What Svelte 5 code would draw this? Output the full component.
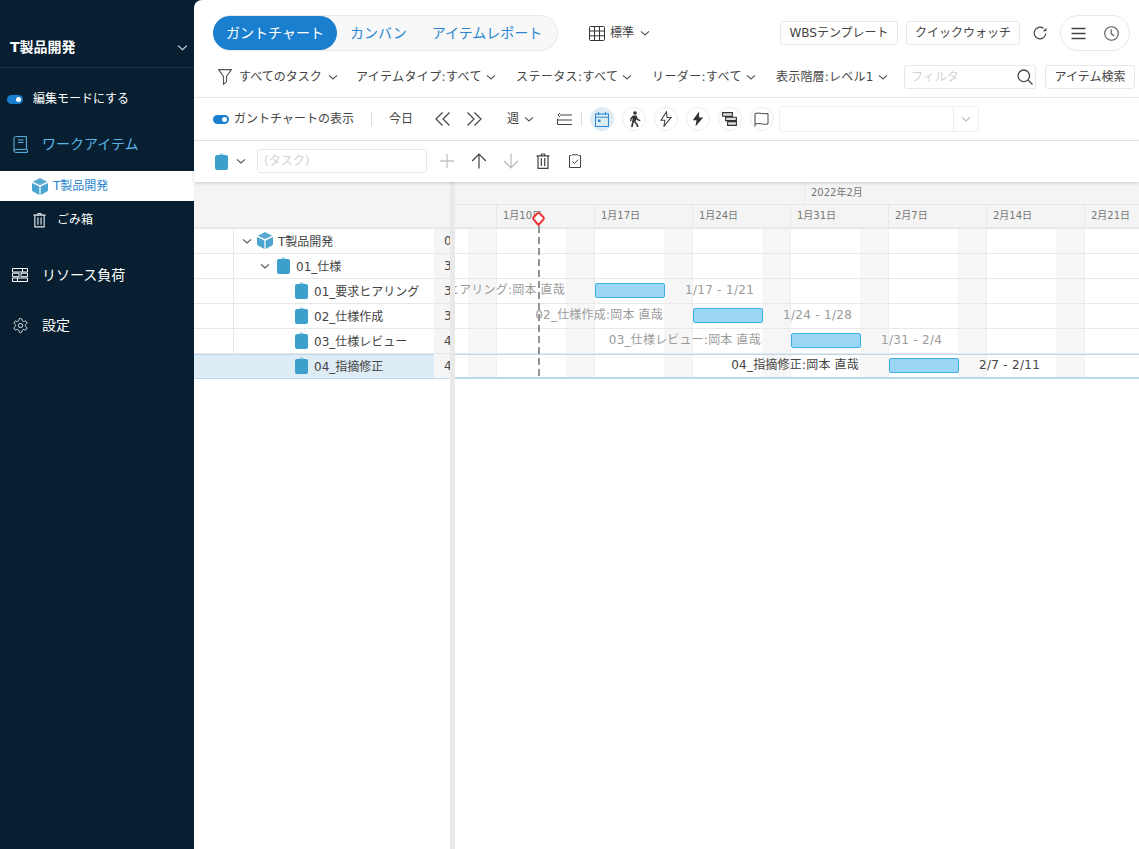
<script>
  const filters = [
    { t: 'すべてのタスク', m: 7, w: 84, ls: 0 },
    { t: 'アイテムタイプ:すべて', m: 18, w: 125, ls: 0.4 },
    { t: 'ステータス:すべて', m: 20, w: 101, ls: 0.4 },
    { t: 'リーダー:すべて', m: 20, w: 89, ls: 0.4 },
    { t: '表示階層:レベル1', m: 20, w: 97, ls: 0.2 }
  ];
  const rows = [
    { name: 'T製品開発', num: '0', level: 0, kind: 'cube', open: true },
    { name: '01_仕様', num: '3', level: 1, kind: 'clip', open: true },
    { name: '01_要求ヒアリング', num: '3', level: 2, kind: 'clip', start: 140, date: '1/17 - 1/21' },
    { name: '02_仕様作成', num: '3', level: 2, kind: 'clip', start: 238, date: '1/24 - 1/28' },
    { name: '03_仕様レビュー', num: '4', level: 2, kind: 'clip', start: 336, date: '1/31 - 2/4' },
    { name: '04_指摘修正', num: '4', level: 2, kind: 'clip', start: 434, date: '2/7 - 2/11', selected: true }
  ];
  const weeks = ['1月10日', '1月17日', '1月24日', '1月31日', '2月7日', '2月14日', '2月21日'];
  const gridWeeks = ['', ...weeks];
  const pad = [1, 19, 39];
  const twGap = [5, 7, 5];
</script>

{#snippet chev(size = 10, color = '#555')}
  <svg class="chev" width={size} height={size} viewBox="0 0 10 10" fill="none" stroke={color} stroke-width="1.1"><path d="M1 3.3 5 7l4-3.7" /></svg>
{/snippet}

{#snippet clip()}
  <svg width="13" height="17" viewBox="0 0 13 17"><path fill="#3d9fcc" d="M4.4 2 5 1h3l.6 1h2.4a2 2 0 0 1 2 2v11a2 2 0 0 1-2 2H2a2 2 0 0 1-2-2V4a2 2 0 0 1 2-2z" /><path fill="#8cc8e4" d="M5 .6h3v1.6H5z" /></svg>
{/snippet}

{#snippet cube()}
  <svg width="16" height="17" viewBox="0 0 16 17" fill="#4ba3cf"><path d="M8 0 15.200 3.700 8 7.300 .8 3.700z" fill="#5aabd3" /><path d="M0 5 7.400 8.600V17L1 13.500a2 2 0 0 1-1-1.700z" /><path d="M16 5 8.600 8.600V17l6.400-3.500a2 2 0 0 0 1-1.700z" /></svg>
{/snippet}

{#snippet trash(color, w = 14, h = 16)}
  <svg width={w} height={h} viewBox="0 0 14 16" fill="none" stroke={color} stroke-width="1.200"><path d="M.5 2.800h13M5 2.600 5.500 1h3L9 2.600M2 2.800V15.400h10V2.800M5.300 5v8M8.700 5v8" /></svg>
{/snippet}

<div class="app">
  <aside class="side">
    <div class="project"><span>T製品開発</span>{@render chev(11, '#cfd8de')}</div>
    <div class="edit"><span class="toggle"></span><span>編集モードにする</span></div>
    <div class="nav work">
      <svg width="15" height="17" viewBox="0 0 15 17" fill="none" stroke="#62b9e8" stroke-width="1"><path d="M2.600.600H13.400V13.400H2.600A1.600 1.600 0 0 0 1 15V2.200A1.600 1.600 0 0 1 2.600.600zM1 15a1.500 1.500 0 0 0 1.600 1.400h11.800v-3M5 4h5.500M5 6.500h5.500" /></svg>
      <span>ワークアイテム</span>
    </div>
    <div class="sub active">{@render cube()}<span>T製品開発</span></div>
    <div class="sub trash">{@render trash('#e8edf0', 13, 16)}<span>ごみ箱</span></div>
    <div class="nav res">
      <svg width="16" height="14" viewBox="0 0 16 14" fill="none" stroke="#fff" stroke-width="1"><path d="M.5.500h15v3.500H.5zM.5 5.200h6.500v3.500H.5zM9 5.200h6.500v3.500H9zM.5 10h15v3.500H.5zM5.500 10v3.500M10.500.500V4" /></svg>
      <span>リソース負荷</span>
    </div>
    <div class="nav set">
      <svg width="17" height="17" viewBox="0 0 24 24" fill="none" stroke="#dfe6ea" stroke-width="1.400"><path d="M12.220 2h-.44a2 2 0 0 0-2 2v.18a2 2 0 0 1-1 1.730l-.43.250a2 2 0 0 1-2 0l-.15-.08a2 2 0 0 0-2.730.730l-.22.380a2 2 0 0 0 .730 2.730l.15.100a2 2 0 0 1 1 1.720v.510a2 2 0 0 1-1 1.740l-.15.090a2 2 0 0 0-.730 2.730l.22.380a2 2 0 0 0 2.730.730l.15-.08a2 2 0 0 1 2 0l.43.250a2 2 0 0 1 1 1.730V20a2 2 0 0 0 2 2h.44a2 2 0 0 0 2-2v-.18a2 2 0 0 1 1-1.730l.43-.25a2 2 0 0 1 2 0l.15.08a2 2 0 0 0 2.730-.73l.22-.39a2 2 0 0 0-.73-2.730l-.15-.08a2 2 0 0 1-1-1.740v-.5a2 2 0 0 1 1-1.740l.15-.09a2 2 0 0 0 .73-2.730l-.22-.38a2 2 0 0 0-2.730-.73l-.15.08a2 2 0 0 1-2 0l-.43-.25a2 2 0 0 1-1-1.730V4a2 2 0 0 0-2-2z" /><circle cx="12" cy="12" r="3" /></svg>
      <span>設定</span>
    </div>
  </aside>

  <main class="main">
    <div class="bar1">
      <div class="tabs">
        <span class="tab on">ガントチャート</span>
        <span class="tab kan">カンバン</span>
        <span class="tab rep">アイテムレポート</span>
      </div>
      <div class="view">
        <svg width="16" height="15" viewBox="0 0 16 15" fill="none" stroke="#333" stroke-width="1"><rect x=".5" y=".5" width="15" height="14" rx="1" /><path d="M.5 5h15M.5 9.800h15M5.500.500v14M10.500.500v14" /></svg>
        <span>標準</span>{@render chev()}
      </div>
      <div class="right1">
        <span class="btn wbs">WBSテンプレート</span>
        <span class="btn">クイックウォッチ</span>
        <svg class="refresh" width="14" height="14" viewBox="0 0 14 14" fill="none" stroke="#444" stroke-width="1.200"><path d="M12.800 7.500A5.800 5.800 0 1 1 10.500 2.400" /><path d="M9.800 5.200h3.600V1.800z" fill="#444" stroke="none" /></svg>
        <div class="pill">
          <svg width="15" height="13" viewBox="0 0 15 13" stroke="#444" stroke-width="1.500"><path d="M.5 1.500h14M.5 6.500h14M.5 11.500h14" /></svg>
          <svg width="15" height="15" viewBox="0 0 15 15" fill="none" stroke="#555" stroke-width="1.100"><circle cx="7.500" cy="7.500" r="6.800" /><path d="M7.200 3.200v4.500l3 2.300" /></svg>
        </div>
      </div>
    </div>

    <div class="bar2">
      <svg class="funnel" width="14" height="16" viewBox="0 0 14 16" fill="none" stroke="#555" stroke-width="1.100"><path d="M.6.600h12.800L8.500 7.400v5.200l-3 2.800V7.400z" /></svg>
      {#each filters as f}
        <span class="filter" style="margin-left: {f.m}px"><span style="width: {f.w}px; letter-spacing: {f.ls}px">{f.t}</span>{@render chev()}</span>
      {/each}
      <div class="right2">
        <div class="search">
          <span>フィルタ</span>
          <svg width="16" height="16" viewBox="0 0 16 16" fill="none" stroke="#444" stroke-width="1.300"><circle cx="6.800" cy="6.800" r="5.800" /><path d="m11 11 4.500 4.500" /></svg>
        </div>
        <span class="btn find">アイテム検索</span>
      </div>
    </div>

    <div class="bar3">
      <span class="toggle"></span>
      <span class="lbl">ガントチャートの表示</span>
      <span class="vr v1"></span>
      <span class="today">今日</span>
      <svg class="prev" width="16" height="14" viewBox="0 0 16 14" fill="none" stroke="#444" stroke-width="1.200"><path d="M7.500.500 1 7l6.500 6.500M14.500.500 8 7l6.500 6.500" /></svg>
      <svg class="next" width="16" height="14" viewBox="0 0 16 14" fill="none" stroke="#444" stroke-width="1.200"><path d="M1.500.500 8 7l-6.500 6.500M8.500.500 15 7l-6.500 6.500" /></svg>
      <span class="week"><span>週</span>{@render chev()}</span>
      <svg class="indent" width="15" height="14" viewBox="0 0 15 14" fill="none" stroke="#444" stroke-width="1"><path d="M3 3h12M.5 8h14.500M.5 12.500h14.500M.5 6.500v6" /><path d="m3 1-2 2 2 2" /></svg>
      <span class="vr v2"></span>
      <div class="circles">
        <span class="circ cal">
          <svg width="14" height="15" viewBox="0 0 14 15" fill="none" stroke="#2f8ad6" stroke-width="1.100"><rect x=".5" y="2" width="13" height="12.500" /><path d="M.5 5.200h13M3.500 0v3M10.500 0v3" /><rect x="3" y="7.500" width="2.500" height="2.500" fill="#2f8ad6" stroke="none" /></svg>
        </span>
        <span class="circ">
          <svg width="14" height="16" viewBox="0 0 14 16" fill="#333"><circle cx="8" cy="2" r="1.800" /><path d="M6 4.500h3.500L11 8l2.500 1-.5 1.200-3.300-1.300-.5-1 -.7 2.800 2.300 2.200L11.500 16h-1.600L9 13.200 6.800 11 5.700 16H4L5.800 7.300 4.700 8 4.200 10.400 3 10.100 3.500 7z" /></svg>
        </span>
        <span class="circ">
          <svg width="12" height="16" viewBox="0 0 12 16" fill="none" stroke="#444" stroke-width="1.100"><path d="M6.500.800 1 9.200h3.800L4 15.200 11 6.500H7z" /></svg>
        </span>
        <span class="circ">
          <svg width="12" height="16" viewBox="0 0 12 16" fill="#333"><path d="M7 .5 .8 9.200h3.700L3.500 15.500 11.200 6.500H7.200z" /></svg>
        </span>
        <span class="circ">
          <svg width="15" height="14" viewBox="0 0 15 14" fill="#ddd" stroke="#333" stroke-width="1.100"><path d="M.6.600h9.800v3.600H.6zM3.600 5.200h10.800v3.400H3.600zM5.600 9.600h8.800v3.800H5.600z" /></svg>
        </span>
        <span class="circ">
          <svg width="15" height="15" viewBox="0 0 15 15" fill="none" stroke="#444" stroke-width="1"><path d="M1 14.500V1.500c4-1.500 9 1.200 13 0v10.500c-4 1.200-9-1.500-13 0" /></svg>
        </span>
      </div>
      <div class="select">
        <span class="sel-main"></span>
        <span class="sel-arrow">{@render chev(10, '#bbb')}</span>
      </div>
    </div>

    <div class="bar4">
      {@render clip()}
      <span class="c4">{@render chev()}</span>
      <div class="task">(タスク)</div>
      <div class="tools">
        <svg width="16" height="16" viewBox="0 0 16 16" stroke="#c4c4c4" stroke-width="1.300"><path d="M8 1v14M1 8h14" /></svg>
        <svg width="16" height="16" viewBox="0 0 16 16" fill="none" stroke="#444" stroke-width="1.200"><path d="M8 15.500V1.500M1.200 8 8 1.200 14.800 8" /></svg>
        <svg width="16" height="16" viewBox="0 0 16 16" fill="none" stroke="#b8b8b8" stroke-width="1.200"><path d="M8 .5v14M1.200 8 8 14.800 14.800 8" /></svg>
        <span class="tt">{@render trash('#444', 14, 16)}</span>
        <svg class="tt" width="16" height="16" viewBox="0 0 16 16" fill="none" stroke="#444" stroke-width="1"><path d="M2.500 2.500h2M11.500 2.500h2M2.500 2.500v12h11v-12M5 1.800h6M5.500 8.500l2 2 3.500-3.700" /></svg>
      </div>
    </div>

    <div class="chart">
      <div class="table">
        <div class="thead"></div>
        {#each rows as r}
          <div class="trow" class:sel={r.selected}>
            <div class="blank"></div>
            <div class="namecell" style="padding-left: {pad[r.level]}px">
              <span class="tw" style="margin-right: {twGap[r.level]}px">{#if r.open}{@render chev()}{/if}</span>
              <span class="ico">
                {#if r.kind === 'cube'}{@render cube()}{:else}{@render clip()}{/if}
              </span>
              <span class="nm" class:first={r.level === 0}>{r.name}</span>
            </div>
            <div class="numcell">{r.num}</div>
          </div>
        {/each}
      </div>
      <div class="split"></div>
      <div class="gantt">
        <div class="ghead">
          <div class="months"><span class="month">2022年2月</span></div>
          <div class="weeks">
            <span class="wk"></span>
            {#each weeks as w}<span class="wk">{w}</span>{/each}
          </div>
        </div>
        <div class="gbody">
          <div class="grid">
            {#each gridWeeks as w}<div class="gw"><span class="wkend"></span></div>{/each}
          </div>
          {#each rows as r}
            <div class="grow" class:sel={r.selected}>
              {#if r.date}
                <span class="glabel" style="right: {684 - r.start + 30}px">{r.name}:岡本 直哉</span>
                <span class="gbar" style="left: {r.start}px"></span>
                <span class="gdate" style="left: {r.start + 90}px">{r.date}</span>
              {/if}
            </div>
          {/each}
        </div>
        <div class="todayline"></div>
        <svg class="pin" width="13" height="14" viewBox="0 0 13 14"><path d="M6.500 13 1.600 7.400Q.7 6.300 1.600 5.300L5.200 1.600Q6.500.5 7.800 1.600L11.400 5.300Q12.300 6.300 11.400 7.400z" fill="#fff" stroke="#ee3333" stroke-width="2" /></svg>
      </div>
    </div>
  </main>
</div>

<style>
  :global(body) {
    margin: 0;
    background: #071f30;
  }
  .app {
    display: flex;
    width: 1139px;
    height: 849px;
    overflow: hidden;
    background: #071f30;
    font-family: 'DejaVu Sans', 'Noto Sans CJK JP', sans-serif;
    font-size: 12px;
    line-height: 18px;
    color: #444;
  }
  svg { display: block; flex: none; }
  .chev { flex: none; }

  .side {
    width: 194px;
    flex: none;
    color: #fff;
    display: flex;
    flex-direction: column;
  }
  .project {
    height: 40px;
    padding: 27px 6px 0 10px;
    border-bottom: 1px solid #1c3443;
    display: flex;
    align-items: center;
    justify-content: space-between;
    font-size: 14px;
    font-weight: 700;
  }
  .edit {
    display: flex;
    align-items: center;
    gap: 10px;
    height: 18px;
    margin: 22px 0 0 7px;
    font-size: 12px;
  }
  .toggle {
    display: block;
    width: 16px;
    height: 9px;
    border-radius: 5px;
    background: #1a7fcf;
    position: relative;
    flex: none;
  }
  .toggle::after {
    content: '';
    position: absolute;
    right: 2px;
    top: 2px;
    width: 5px;
    height: 5px;
    border-radius: 50%;
    background: #fff;
  }
  .nav {
    display: flex;
    align-items: center;
    height: 24px;
    font-size: 14px;
    line-height: 24px;
  }
  .nav.work { margin-top: 24px; padding-left: 13px; gap: 14px; color: #5ab6e6; }
  .nav.res { margin-top: 28px; padding-left: 12px; gap: 14px; }
  .nav.set { margin-top: 26px; padding-left: 12px; gap: 13px; }
  .sub {
    display: flex;
    align-items: center;
    height: 30px;
    font-size: 12px;
  }
  .sub.active {
    margin-top: 15px;
    background: #fff;
    color: #2a85d0;
    padding-left: 32px;
    gap: 5px;
  }
  .sub.trash { margin-top: 4px; padding-left: 33px; gap: 11px; }

  .main {
    flex: 1;
    min-width: 0;
    background: #fff;
    border-top-left-radius: 8px;
    display: flex;
    flex-direction: column;
  }
  .bar1 {
    height: 36px;
    margin-top: 15px;
    padding-left: 19px;
    display: flex;
    align-items: center;
  }
  .tabs {
    box-sizing: border-box;
    width: 345px;
    height: 36px;
    display: flex;
    align-items: center;
    background: #f8f8f8;
    border: 1px solid #e8e8e8;
    border-left: none;
    border-radius: 18px;
    font-size: 14px;
    color: #2a85d0;
  }
  .tab.on {
    box-sizing: border-box;
    width: 124px;
    height: 34px;
    line-height: 34px;
    text-align: center;
    color: #fff;
    background: #1a7fcf;
    border-radius: 17px;
  }
  .tab.kan { margin-left: 13px; }
  .tab.rep { margin-left: 25px; }
  .view {
    margin-left: 31px;
    display: flex;
    align-items: center;
    gap: 5px;
    color: #444;
  }
  .view .chev { margin-left: 1px; }
  .right1 {
    margin-left: auto;
    margin-right: 9px;
    display: flex;
    align-items: center;
  }
  .btn {
    box-sizing: border-box;
    height: 24px;
    line-height: 22px;
    padding: 0 8px;
    background: #fff;
    border: 1px solid #e8e8e8;
    border-radius: 3px;
    color: #444;
    white-space: nowrap;
  }
  .btn.wbs { width: 118px; padding: 0; text-align: center; }
  .right1 .btn + .btn { margin-left: 8px; }
  .refresh { margin-left: 13px; }
  .pill {
    box-sizing: border-box;
    margin-left: 13px;
    width: 70px;
    height: 36px;
    border: 1px solid #e8e8e8;
    border-radius: 18px;
    display: flex;
    align-items: center;
    justify-content: space-between;
    padding: 0 10px;
  }

  .bar2 {
    height: 47px;
    border-bottom: 1px solid #e8e8e8;
    padding-left: 24px;
    display: flex;
    align-items: center;
    box-sizing: border-box;
    padding-top: 6px;
  }
  .filter {
    display: flex;
    align-items: center;
    gap: 5px;
    white-space: nowrap;
  }
  .filter > span { display: block; flex: none; }
  .right2 {
    margin-left: auto;
    margin-right: 4px;
    display: flex;
    align-items: center;
    gap: 9px;
  }
  .search {
    box-sizing: border-box;
    width: 132px;
    height: 24px;
    border: 1px solid #e8e8e8;
    border-radius: 3px;
    display: flex;
    align-items: center;
    justify-content: space-between;
    padding: 0 2px 0 6px;
    color: #d4d4d4;
  }
  .btn.find { width: 90px; text-align: center; padding: 0; }

  .bar3 {
    height: 43px;
    box-sizing: border-box;
    border-bottom: 1px solid #e8e8e8;
    padding-left: 19px;
    display: flex;
    align-items: center;
  }
  .lbl { margin-left: 5px; white-space: nowrap; }
  .vr { width: 1px; height: 14px; background: #ddd; flex: none; }
  .v1 { margin-left: 17px; }
  .today { margin-left: 17px; }
  .prev { margin-left: 22px; }
  .next { margin-left: 15px; }
  .week { margin-left: 25px; display: flex; align-items: center; gap: 5px; }
  .indent { margin-left: 23px; }
  .v2 { margin-left: 9px; }
  .circles {
    margin-left: 8px;
    display: flex;
    gap: 8px;
  }
  .circ {
    box-sizing: border-box;
    width: 24px;
    height: 24px;
    border: 1px solid #ececec;
    border-radius: 50%;
    display: flex;
    align-items: center;
    justify-content: center;
  }
  .circ.cal { background: #deecf6; border-color: #deecf6; }
  .select {
    margin-left: 5px;
    box-sizing: border-box;
    width: 200px;
    height: 26px;
    border: 1px solid #efefef;
    border-radius: 3px;
    display: flex;
  }
  .sel-main { flex: 1; border-right: 1px solid #efefef; }
  .sel-arrow { width: 24px; display: flex; align-items: center; justify-content: center; }

  .bar4 {
    height: 41px;
    box-sizing: border-box;
    padding: 0 0 1px 21px;
    display: flex;
    align-items: center;
    position: relative;
    box-shadow: 0 1px 3px rgba(0, 0, 0, 0.18);
    z-index: 2;
    background: #fff;
  }
  .c4 { margin-left: 8px; }
  .task {
    margin-left: 11px;
    box-sizing: border-box;
    width: 170px;
    height: 24px;
    line-height: 22px;
    padding-left: 6px;
    border: 1px solid #e8e8e8;
    border-radius: 3px;
    color: #d4d4d4;
  }
  .tools {
    margin-left: 12px;
    display: flex;
    align-items: center;
    gap: 16px;
  }
  .tt { margin-left: 1px; display: block; }

  .chart {
    flex: 1;
    min-height: 0;
    display: flex;
    background: #fff;
  }
  .table { width: 256px; flex: none; }
  .thead {
    height: 47px;
    box-sizing: border-box;
    background: #f4f4f4;
    border-bottom: 2px solid #e8e8e8;
  }
  .trow {
    height: 25px;
    box-sizing: border-box;
    border-bottom: 1px solid #e8e8e8;
    display: flex;
    align-items: stretch;
  }
  .trow.sel {
    background: #deecf6;
    border-bottom-color: #bcd9ee;
    box-shadow: inset 0 1px 0 #bcd9ee;
  }
  .blank { width: 40px; flex: none; box-sizing: border-box; border-right: 1px solid #e8e8e8; }
  .trow.sel .blank { border-right-color: #deecf6; }
  .namecell {
    width: 200px;
    flex: none;
    box-sizing: border-box;
    display: flex;
    align-items: center;
  }
  .tw { width: 10px; flex: none; margin-left: 7px; display: block; }
  .ico { display: block; margin-top: -2px; }
  .nm { margin-left: 6px; padding-top: 1px; white-space: nowrap; color: #444; }
  .nm.first { margin-left: 5px; }
  .numcell {
    flex: 1;
    min-width: 0;
    background: #f5f5f5;
    padding-left: 10px;
    color: #444;
    overflow: hidden;
    line-height: 24px;
  }
  .split { width: 5px; flex: none; background: #e9e9e9; }
  .gantt {
    flex: 1;
    min-width: 0;
    position: relative;
    overflow: hidden;
  }
  .ghead { background: #f4f4f4; height: 47px; box-sizing: border-box; border-bottom: 2px solid #e8e8e8; font-size: 10px; color: #777; }
  .months { height: 23px; border-bottom: 1px solid #e8e8e8; box-sizing: border-box; padding-left: 349px; }
  .month {
    display: block;
    height: 22px;
    line-height: 22px;
    border-left: 1px solid #e8e8e8;
    padding-left: 6px;
  }
  .weeks { display: flex; height: 22px; margin-left: -57px; }
  .wk {
    flex: none;
    width: 98px;
    box-sizing: border-box;
    border-left: 1px solid #e8e8e8;
    padding-left: 6px;
    line-height: 22px;
  }
  .gbody { position: relative; }
  .grid {
    position: absolute;
    inset: 0;
    display: flex;
    margin-left: -57px;
  }
  .gw {
    flex: none;
    width: 98px;
    box-sizing: border-box;
    border-left: 1px solid #f0f0f0;
    display: flex;
    justify-content: flex-end;
  }
  .wkend { width: 28px; background: #f6f6f6; }
  .grow {
    position: relative;
    height: 25px;
    box-sizing: border-box;
    border-bottom: 1px solid #e8e8e8;
    color: #9b9b9b;
    line-height: 23px;
    white-space: nowrap;
  }
  .grow.sel {
    color: #444;
    border-bottom: 2px solid #bcd9ee;
    box-shadow: inset 0 1px 0 #bcd9ee;
  }
  .glabel { position: absolute; top: 0; letter-spacing: 0.2px; }
  .gdate { position: absolute; top: 0; letter-spacing: 0.3px; }
  .gbar {
    position: absolute;
    top: 4px;
    width: 70px;
    height: 15px;
    box-sizing: border-box;
    background: #9bd7f5;
    border: 1px solid #3fb0ea;
    border-radius: 2px;
  }
  .todayline {
    position: absolute;
    left: 83px;
    top: 44px;
    width: 2px;
    height: 153px;
    background: repeating-linear-gradient(to bottom, #929292 0 7px, transparent 7px 11px);
  }
  .pin {
    position: absolute;
    left: 77px;
    top: 30px;
  }
</style>
